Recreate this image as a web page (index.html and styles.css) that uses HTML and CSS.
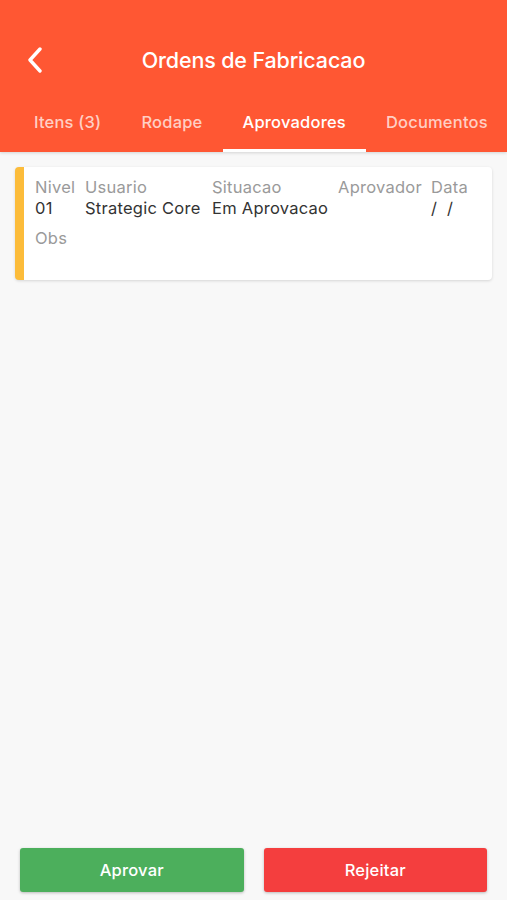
FILE: index.html
```html
<!DOCTYPE html>
<html lang="pt">
<head>
  <meta charset="UTF-8">
  <meta name="viewport" content="width=device-width,initial-scale=1.0">
  <title>Ordens de Fabricacao</title>
  <link rel="stylesheet" href="styles.css">
</head>
<body>
  <div class="page">
    <!-- cabecalho -->
    <div class="header">
      <div class="toolbar">
        <span class="back">
          <svg width="18" height="26" viewBox="0 0 18 26"><path d="M14 2 L4 13 L14 24" fill="none" stroke="#fff" stroke-width="3.4" stroke-linecap="round" stroke-linejoin="round"/></svg>
        </span>
        <h1 class="title">Ordens de Fabricacao</h1>
      </div>
      <div class="tabs">
        <span class="tab">Itens (3)</span>
        <span class="tab">Rodape</span>
        <span class="tab active">Aprovadores</span>
        <span class="tab">Documentos</span>
      </div>
    </div>

    <!-- aprovadores -->
    <div class="content">
      <div class="card">
        <div class="row">
          <div class="col col-nivel">
            <span class="label">Nivel</span>
            <span class="value">01</span>
          </div>
          <div class="col col-usuario">
            <span class="label">Usuario</span>
            <span class="value">Strategic Core</span>
          </div>
          <div class="col col-situacao">
            <span class="label">Situacao</span>
            <span class="value">Em Aprovacao</span>
          </div>
          <div class="col col-aprovador">
            <span class="label">Aprovador</span>
            <span class="value"></span>
          </div>
          <div class="col col-data">
            <span class="label">Data</span>
            <span class="value">/ &nbsp;/</span>
          </div>
        </div>
        <div class="obs">
          <span class="label">Obs</span>
        </div>
      </div>
    </div>

    <div class="footer">
      <button class="btn btn-ok">Aprovar</button>
      <button class="btn btn-no">Rejeitar</button>
    </div>
  </div>
</body>
</html>
```

FILE: styles.css
```css
/* geral */
body {
  margin: 0;
  padding: 0;
  font-family: Inter, "Open Sans", sans-serif;
  background: #f8f8f8;
}
.page {
  height: 900px;
  display: flex;
  flex-direction: column;
}

/* cabecalho */
.header {
  background: #ff5733;
  color: #fff;
  height: 152px;
  box-shadow: 0 1px 3px rgba(0,0,0,.15);
  display: flex;
  flex-direction: column;
}
.toolbar {
  display: flex;
  align-items: center;
  height: 60px;
  margin-top: 30px;
  padding-left: 26px;
}
.back {
  width: 18px;
  height: 26px;
  display: flex;
}
.title {
  flex: 1;
  margin: 0 44px 0 0;
  text-align: center;
  font-size: 21.5px;
  font-weight: 500;
  letter-spacing: -0.15px;
}
.tabs {
  display: flex;
  margin-top: auto;
  padding-left: 14px;
  height: 62px;
}
.tab {
  padding: 4px 20px 0 20px;
  display: flex;
  align-items: center;
  font-size: 16.5px;
  font-weight: 500;
  letter-spacing: 0.2px;
  color: rgba(255,255,255,.72);
  border-bottom: 3px solid transparent;
  white-space: nowrap;
}
.tab.active {
  color: #fff;
  border-bottom-color: #fff;
}

/* cartao */
.content {
  flex: 1;
  padding: 15px 15px 0 15px;
}
.card {
  background: #fff;
  border-left: 9px solid #fcbc3a;
  border-radius: 4px;
  box-shadow: 0 1px 3px rgba(0,0,0,.14);
  height: 113px;
  box-sizing: border-box;
  padding: 10px 0 0 11px;
}
.row {
  display: flex;
}
.col {
  display: flex;
  flex-direction: column;
}
.col-nivel { width: 50px; }
.col-usuario { width: 127px; }
.col-situacao { width: 126px; }
.col-aprovador { width: 93px; }
.label {
  font-size: 16.5px;
  letter-spacing: 0.25px;
  color: #9a9a9a;
  line-height: 21px;
}
.value {
  font-size: 16.5px;
  letter-spacing: 0.25px;
  color: #333;
  line-height: 21px;
  min-height: 21px;
}
.obs {
  margin-top: 9px;
}

/* botoes */
.footer {
  display: flex;
  gap: 20px;
  padding: 0 20px 8px 20px;
}
.btn {
  flex: 1;
  height: 44px;
  border: none;
  border-radius: 3px;
  color: #fff;
  font-family: Inter, "Open Sans", sans-serif;
  font-size: 16.5px;
  font-weight: 500;
  letter-spacing: 0.2px;
  box-shadow: 0 1px 3px rgba(0,0,0,.25);
}
.btn-ok {
  background: #4caf5c;
}
.btn-no {
  background: #f43e3e;
}
```
